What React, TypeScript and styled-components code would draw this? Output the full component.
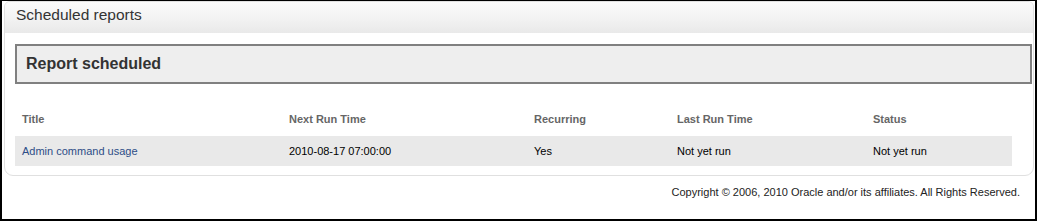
import styled, { createGlobalStyle } from "styled-components";

const GlobalStyle = createGlobalStyle`
  html, body {
    margin: 0;
    padding: 0;
    background: #fff;
  }
  body {
    font-family: "Liberation Sans", Arial, sans-serif;
  }
`;

const Frame = styled.div`
  box-sizing: border-box;
  width: 1037px;
  height: 221px;
  border-style: solid;
  border-color: #000;
  border-width: 1px 2px 2px 2px;
  padding: 0 1px 0 2px;
  background: #fff;
`;

const Panel = styled.section`
  box-sizing: border-box;
  width: 1030px;
  border: 1px solid #e0e0e0;
  border-radius: 6px 6px 9px 9px;
  padding-bottom: 9px;
  overflow: hidden;
`;

const PanelHeader = styled.h2`
  box-sizing: border-box;
  margin: 0;
  height: 31px;
  padding: 3px 0 0 11px;
  font-size: 15.5px;
  font-weight: normal;
  line-height: 20px;
  color: #333;
  background: linear-gradient(to bottom, #fbfbfb 0%, #f3f3f3 50%, #e9e9e9 100%);
`;

const Notice = styled.div`
  box-sizing: border-box;
  margin: 11px 1px 0 10px;
  height: 40px;
  border: 2px solid #808080;
  background: #eeeeee;
  padding-left: 9px;
  font-size: 16px;
  font-weight: bold;
  line-height: 36px;
  color: #333;
`;

const Table = styled.table`
  margin: 22px 0 0 10px;
  width: 997px;
  border-collapse: collapse;
  table-layout: fixed;
  font-size: 11px;
`;

const HeadCell = styled.th<{ $w: number }>`
  width: ${(p) => p.$w}px;
  height: 30px;
  box-sizing: border-box;
  padding: 0 7px 4px 7px;
  text-align: left;
  font-weight: bold;
  line-height: 26px;
  color: #666;
`;

const Row = styled.tr`
  background: #e9e9e9;
`;

const Cell = styled.td`
  height: 30px;
  padding: 0 7px;
  line-height: 30px;
  color: #000;
  white-space: nowrap;
`;

const Link = styled.a`
  color: #2d4d87;
  text-decoration: none;
`;

const Footer = styled.footer`
  padding: 9px 14px 0 0;
  text-align: right;
  font-size: 11px;
  line-height: 14px;
  color: #222;
`;

const columns = [
  { label: "Title", width: 267 },
  { label: "Next Run Time", width: 245 },
  { label: "Recurring", width: 143 },
  { label: "Last Run Time", width: 196 },
  { label: "Status", width: 146 },
];

export default function App() {
  return (
    <>
      <GlobalStyle />
      <Frame>
        <Panel>
          <PanelHeader>Scheduled reports</PanelHeader>
          <Notice>Report scheduled</Notice>
          <Table>
            <thead>
              <tr>
                {columns.map((c) => (
                  <HeadCell key={c.label} $w={c.width}>
                    {c.label}
                  </HeadCell>
                ))}
              </tr>
            </thead>
            <tbody>
              <Row>
                <Cell>
                  <Link href="#">Admin command usage</Link>
                </Cell>
                <Cell>2010-08-17 07:00:00</Cell>
                <Cell>Yes</Cell>
                <Cell>Not yet run</Cell>
                <Cell>Not yet run</Cell>
              </Row>
            </tbody>
          </Table>
        </Panel>
        <Footer>
          Copyright © 2006, 2010 Oracle and/or its affiliates. All Rights Reserved.
        </Footer>
      </Frame>
    </>
  );
}
